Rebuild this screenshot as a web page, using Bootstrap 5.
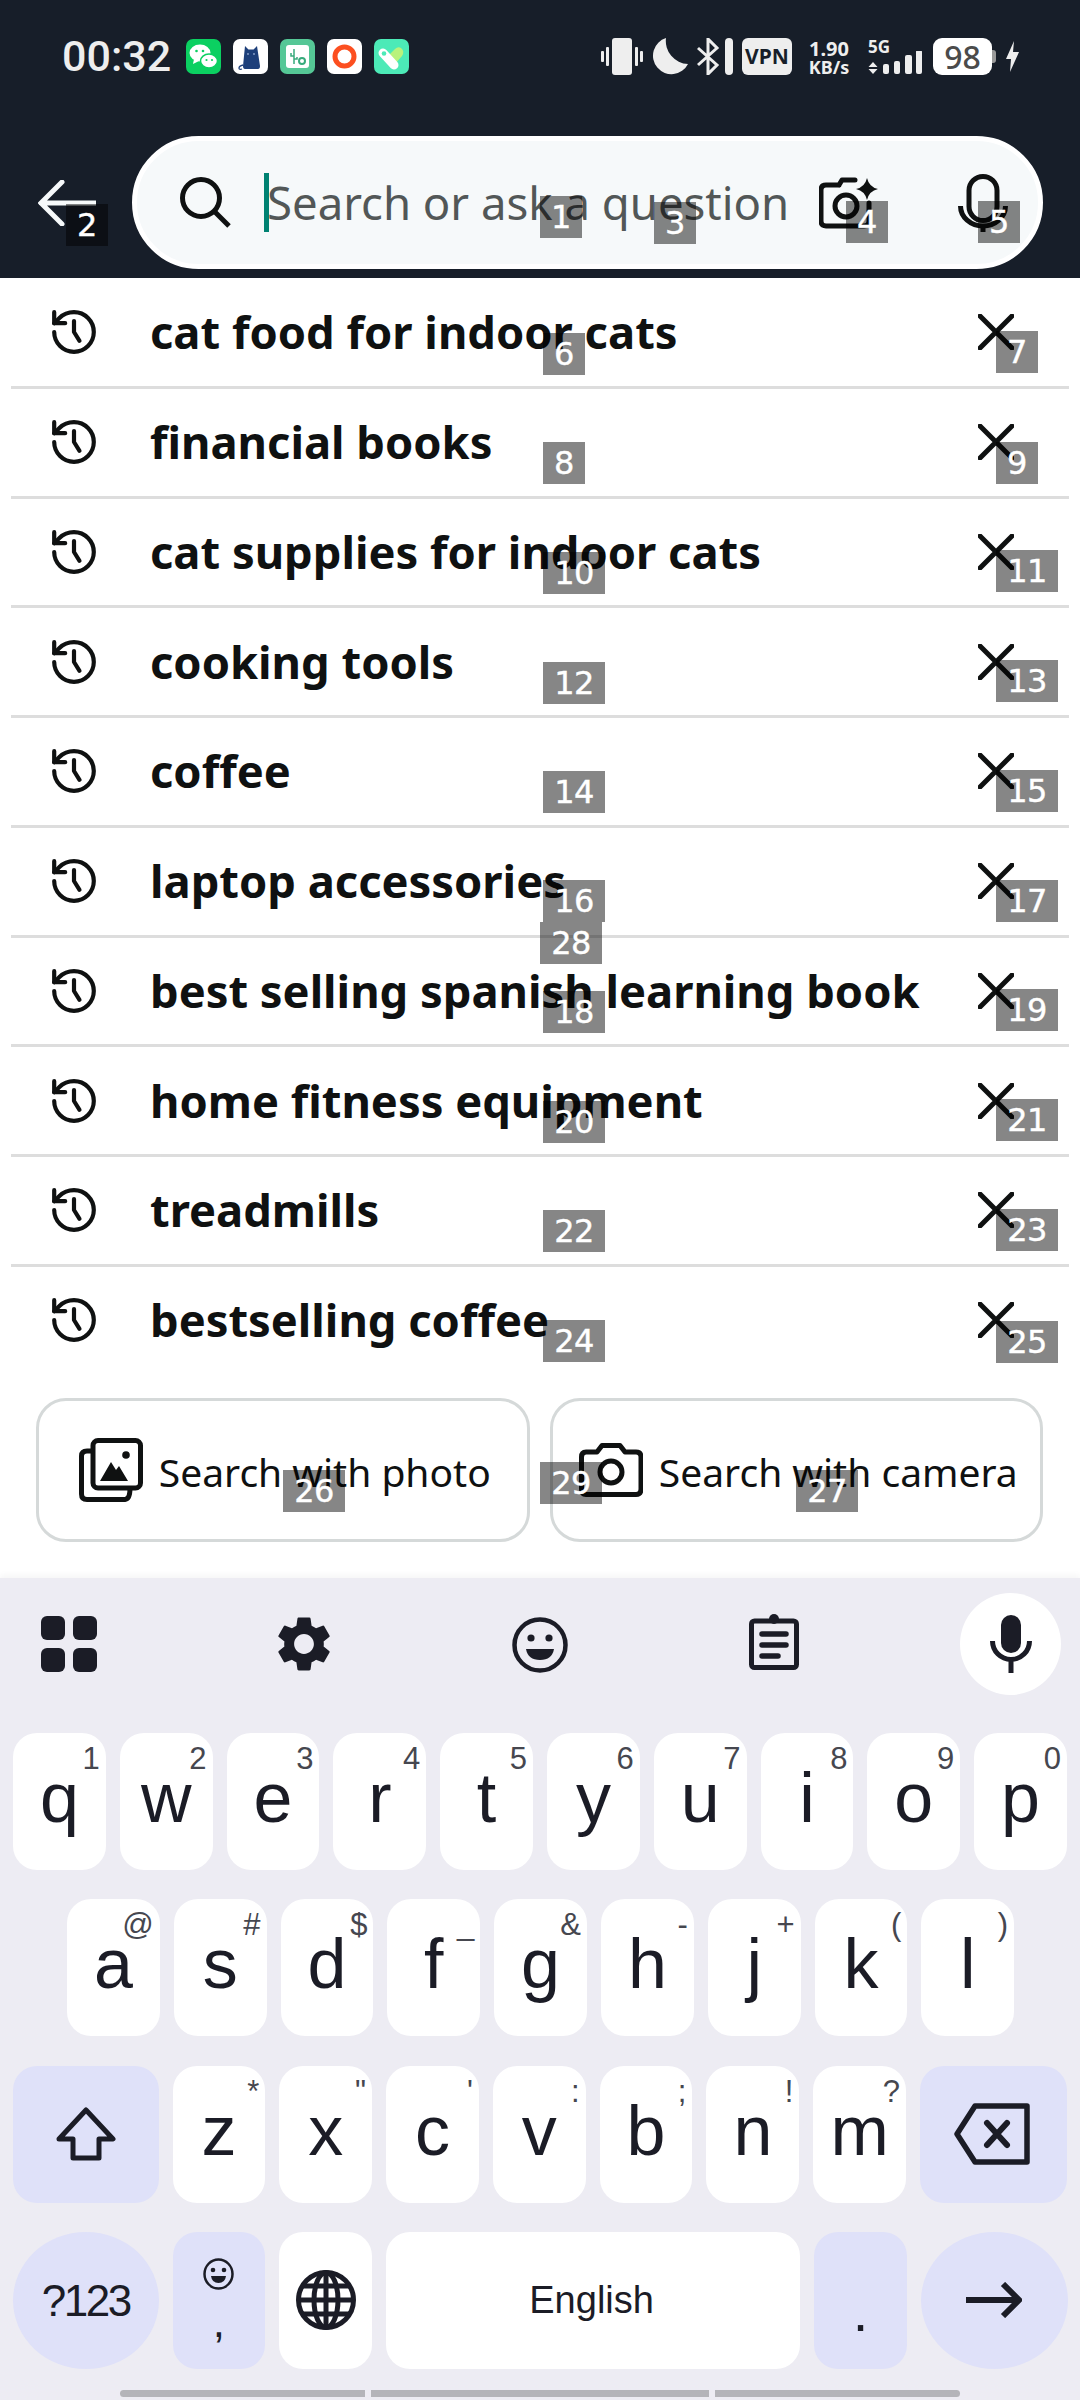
<!doctype html>
<html lang="en">

<head>
    <meta charset="UTF-8" />
    <meta name="viewport" content="width=device-width, initial-scale=1" />
    <title>Search</title>
    <link href="https://cdn.jsdelivr.net/npm/bootstrap@5.3.3/dist/css/bootstrap.min.css" rel="stylesheet">
    <style>
        html, body { width: 1080px; height: 2400px; overflow: hidden; background: #fff; }
        body { position: relative; font-family: "Noto Sans", sans-serif; color: #0f1111; }
        svg { display: block; flex: none; }

        .top-area { background: #171e29; height: 278px; padding-top: 38px; }
        .status-row { height: 37px; padding: 0 61px 0 62px; color: #eee; }
        .clock { font: 500 43px/37px Roboto, sans-serif; width: 124px; }
        .app-icons { gap: 12px; }
        .vpn-box { width: 50px; height: 37px; background: #eee; color: #171e29; border-radius: 6px; font: 700 21px/37px "Noto Sans", sans-serif; text-align: center; }
        .speed { font: 700 20px/20px "Noto Sans", sans-serif; width: 46px; text-align: center; margin-left: 14px; }
        .speed-b { font-size: 18px; line-height: 16px; }
        .batt { width: 59px; height: 37px; background: #fff; color: #4b4b4b; border-radius: 9px; font: 500 32px/37px "Noto Sans", sans-serif; text-align: center; }
        .batt-nub { width: 4px; height: 13px; background: #9a9a9a; border-radius: 0 3px 3px 0; }

        .search-row { margin-top: 61px; }
        .back-wrap { width: 132px; padding-left: 38px; }
        .search-pill { width: 911px; height: 133px; background: #f6f9fa; border: 5px solid #fff; padding-left: 43px; }
        .caret-line { width: 5px; height: 59px; background: #008272; margin-left: 33px; }
        .hint-text { width: 552px; margin-left: -2px; font-size: 45.5px; color: #525757; white-space: nowrap; line-height: 59px; }

        .hist-list { border-radius: 0; margin-top: 1px; }
        .hist-item { height: 109.75px; padding: 0 0 0 41px; margin: 0 11px; border: 0; border-bottom: 3px solid #ddd !important; background: none; }
        .hist-item:last-child { border-bottom: 0 !important; height: 106px; }
        .hist-name { font-size: 45.3px; font-weight: 700; margin-left: 54px; white-space: nowrap; color: #0f1111; font-variant-ligatures: common-ligatures; }
        .hist-x { margin-left: auto; margin-right: 55px; }

        .photo-row { padding: 25px 37px 0 36px; gap: 20px; }
        .photo-btn { width: 494px; height: 144px; border: 3px solid #d5d9d9; border-radius: 30px; background: #fff; color: #0f1111; font-size: 39px; padding: 4px 0 0 4px; gap: 16px; white-space: nowrap; }

        .kbd { position: absolute; left: 0; right: 0; top: 1578px; bottom: 0; background: #edecf3; box-shadow: 0 -3px 6px rgba(0, 0, 0, .04); }
        .kbd-tools { height: 155px; padding: 15px 0 0 41px; }
        .tool-grid { margin-top: 23px; }
        .tool-gear { margin: 18px 0 0 174px; }
        .tool-smile { margin: 24px 0 0 175px; }
        .tool-clip { margin: 21px 0 0 181px; }
        .mic-round { width: 101px; height: 102px; border-radius: 50%; background: #fff; margin-left: 161px; }
        .kbd-rows { gap: 29.33px; }
        .kbd-line { height: 137px; gap: 14px; }
        .kk { position: relative; width: 92.8px; height: 137px; background: #fff; border-radius: 24px; font: 400 70px/130px "Liberation Sans", sans-serif; color: #1b1c26; text-align: center; }
        .kk-alt { background: #dfe1f9; }
        .kk-wide { width: 145.5px; }
        .kk-end { width: 147px; }
        .kk-round { border-radius: 50%; }
        .kk-space { width: 414px; font-size: 38px; line-height: 137px; padding-right: 3px; }
        .kk-sym { font-size: 44px; line-height: 137px; letter-spacing: -2.5px; }
        .kk-hint { position: absolute; right: 6px; top: 8px; font: 400 31px/36px "Liberation Sans", sans-serif; color: #46474f; }
        .kk-dot { font-size: 56px; line-height: 159px; }
        .nav-bars { position: absolute; left: 120px; top: 812px; gap: 6px; }
        .nav-bars div { height: 7px; background: #b4b4b9; }
        .nav-a { width: 245px; border-radius: 4px 0 0 4px; }
        .nav-b { width: 338px; }
        .nav-c { width: 245px; border-radius: 0 4px 4px 0; }

        .mark-box { position: absolute; height: 42px; background: rgba(0, 0, 0, .475); color: #fff; font: 400 32px/42px "DejaVu Sans", sans-serif; text-align: center; letter-spacing: -.5px; -webkit-text-stroke: .4px #fff; }
    </style>
</head>

<body>
    <svg width="0" height="0" style="position:absolute">
        <symbol id="i-history" viewBox="2 2 20 20"><g fill="none" stroke="#0f1111" stroke-width="1.900" stroke-linecap="round" stroke-linejoin="round"><path d="M3 12a9 9 0 1 0 9-9 9.75 9.75 0 0 0-6.74 2.74L3 8"/><path d="M3 3v5h5"/><path d="M12 7v5l2.500 4"/></g></symbol>
        <symbol id="i-x" viewBox="0 0 36 36"><path d="M2 2 34 34M34 2 2 34" stroke="#0f1111" stroke-width="5" fill="none" stroke-linecap="round"/></symbol>
    </svg>

    <div class="top-area">
        <div class="status-row d-flex align-items-center">
            <div class="clock">00:32</div>
            <div class="app-icons d-flex">
                <svg width="35" height="35" viewBox="0 0 35 35"><rect width="35" height="35" rx="7" fill="#0bd061"/><ellipse cx="14" cy="14" rx="10.500" ry="8.500" fill="#fff"/><path d="M8 20l-1 5 6-3z" fill="#fff"/><ellipse cx="23" cy="22" rx="8.500" ry="7" fill="#fff" stroke="#0bd061" stroke-width="1.500"/><circle cx="10.500" cy="12" r="1.300" fill="#0bd061"/><circle cx="17" cy="12" r="1.300" fill="#0bd061"/><circle cx="20.500" cy="21" r="1.100" fill="#0bd061"/><circle cx="26" cy="21" r="1.100" fill="#0bd061"/></svg>
                <svg width="35" height="35" viewBox="0 0 35 35"><rect width="35" height="35" rx="7" fill="#fff"/><path d="M12 7l3.500 3.500h5L24 7l3 20q0 3-2 3H12q-2 0-2-3z" fill="#1d3f7a"/><path d="M10 26q-4 1-4 3t3 1" fill="none" stroke="#1d3f7a" stroke-width="1.300"/><circle cx="15" cy="15" r=".9" fill="#8fa8d0"/><circle cx="21" cy="15" r=".9" fill="#8fa8d0"/></svg>
                <svg width="35" height="35" viewBox="0 0 35 35"><rect width="35" height="35" rx="7" fill="#55c796"/><rect x="6" y="6" width="23" height="23" rx="3" fill="#fff"/><path d="M14 10v15M14 17h-3v-3M14 20h3v-2" fill="none" stroke="#37ab7c" stroke-width="1.500"/><circle cx="22" cy="22" r="3" fill="none" stroke="#37ab7c" stroke-width="2"/></svg>
                <svg width="35" height="35" viewBox="0 0 35 35"><rect width="35" height="35" rx="7" fill="#fff"/><circle cx="17.500" cy="17.500" r="9.500" fill="none" stroke="#fc4f20" stroke-width="5"/></svg>
                <svg width="35" height="35" viewBox="0 0 35 35"><rect width="35" height="35" rx="7" fill="#4ceab7"/><path d="M21 10q3-3 6-1 4 3 1 8l-7 8-8-7z" fill="#b9f27c"/><path d="M9 14 20 26" stroke="#fff" stroke-width="9" stroke-linecap="round"/><circle cx="10" cy="14.500" r="2.300" fill="#4ceab7"/></svg>
            </div>
            <div class="ms-auto d-flex align-items-center">
                <svg width="42" height="37" viewBox="0 0 42 37"><rect x="11" width="20" height="37" rx="3" fill="#eee"/><rect x="5" y="9" width="3" height="19" rx="1" fill="#eee"/><rect y="13" width="3" height="11" rx="1" fill="#eee"/><rect x="34" y="9" width="3" height="19" rx="1" fill="#eee"/><rect x="39" y="13" width="3" height="11" rx="1" fill="#eee"/></svg>
                <svg width="36" height="37" viewBox="0 0 36 37" style="margin-left:9px"><path d="M14 0A18.500 18.500 0 1 0 36 26 23 23 0 0 1 14 0z" fill="#eee"/></svg>
                <svg width="36" height="37" viewBox="0 0 36 37" style="margin-left:9px"><path d="M1 10 20 27 11 36V1l9 9L1 27" fill="none" stroke="#eee" stroke-width="3"/><rect x="28" width="8" height="37" rx="4" fill="#eee"/></svg>
                <div class="vpn-box" style="margin-left:9px">VPN</div>
                <div class="speed">1.90<div class="speed-b">KB/s</div></div>
                <div style="margin-left:16px;width:56px">
                    <div style="font:700 17px/17px 'Noto Sans',sans-serif;height:17px">5G</div>
                    <svg width="56" height="24" viewBox="0 0 56 24" style="margin-top:-4px"><path d="M5 0l4.500 5h-9zM5 12l4.500-5h-9z" fill="#eee" transform="translate(0 11)"/><rect x="15" y="13" width="6" height="10" rx="2" fill="#eee"/><rect x="26" y="10" width="6" height="13" rx="2" fill="#eee"/><rect x="37" y="4" width="7" height="19" rx="2" fill="#eee"/><rect x="48" y="-1" width="6" height="24" rx="2" fill="#eee"/></svg>
                </div>
                <div class="batt" style="margin-left:9px">98</div>
                <div class="batt-nub"></div>
                <svg width="13" height="31" viewBox="0 0 13 31" style="margin-left:10px"><path d="M8 0 0 18h5l-1 13 9-20H7z" fill="#eee"/></svg>
            </div>
        </div>

        <div class="search-row d-flex align-items-center">
            <div class="back-wrap">
                <svg width="58" height="46" viewBox="0 0 58 46"><path d="M24 2 3 23 24 44M3 23H58" fill="none" stroke="#f6f9fa" stroke-width="5" stroke-linecap="round"/></svg>
            </div>
            <div class="search-pill rounded-pill d-flex align-items-center">
                <svg width="51" height="51" viewBox="0 0 51 51"><circle cx="21" cy="21" r="18.500" fill="none" stroke="#0f1111" stroke-width="5"/><path d="M34 34 49 49" stroke="#0f1111" stroke-width="5"/></svg>
                <div class="caret-line"></div>
                <div class="hint-text">Search or ask a question</div>
                <svg width="60" height="52" viewBox="0 0 60 52"><path d="M20 8h-13q-5 0-5 5v31q0 5 5 5h38q5 0 5-5V26M20 8l3-5h13" fill="none" stroke="#0f1111" stroke-width="5" stroke-linecap="round" stroke-linejoin="round"/><circle cx="27" cy="29" r="11" fill="none" stroke="#0f1111" stroke-width="5"/><path d="M48 1q2 9 11 11-9 2-11 11-2-9-11-11 9-2 11-11z" fill="#0f1111"/></svg>
                <svg width="50" height="58" viewBox="0 0 50 58" style="margin-left:79px"><rect x="11" y="2.500" width="28" height="44" rx="14" fill="none" stroke="#0f1111" stroke-width="5"/><path d="M2.500 32a22.500 20 0 0 0 45 0M25 50v8" fill="none" stroke="#0f1111" stroke-width="5"/></svg>
            </div>
        </div>
    </div>

    <div id="hist" class="hist-list list-group list-group-flush"></div>

    <div class="photo-row d-flex">
        <button class="photo-btn btn d-flex align-items-center justify-content-center">
            <svg width="64" height="64" viewBox="0 0 64 64" style="margin-top:-4px"><rect x="14" y="2.500" width="47.500" height="47.500" rx="5" fill="#fff" stroke="#0f1111" stroke-width="5"/><path d="M14 13H8q-5.500 0-5.500 5V56q0 5.500 5.500 5.500H46q5-.5 5-11.500" fill="none" stroke="#0f1111" stroke-width="5"/><circle cx="47" cy="17" r="3.800" fill="#0f1111"/><path d="M21 43 32 24l5 8 3-4 9 15z" fill="#0f1111"/></svg>
            <span>Search with photo</span>
        </button>
        <button class="photo-btn btn d-flex align-items-center justify-content-center">
            <svg width="64" height="54" viewBox="0 0 64 54" style="margin-top:-4px"><path d="M18 9l5-6.500h18l5 6.500h11q5 0 5 5v32q0 5.500-5 5.500H7q-4.500 0-4.500-5.500v-32q0-5 4.500-5z" fill="none" stroke="#0f1111" stroke-width="5" stroke-linejoin="round"/><circle cx="32" cy="29" r="11" fill="none" stroke="#0f1111" stroke-width="5"/></svg>
            <span>Search with camera</span>
        </button>
    </div>

    <div class="kbd">
        <div class="kbd-tools d-flex align-items-start">
            <svg class="tool-grid" width="56" height="56" viewBox="0 0 56 56" fill="#1b1c26"><rect width="24" height="24" rx="6"/><rect x="32" width="24" height="24" rx="6"/><rect y="32" width="24" height="24" rx="6"/><rect x="32" y="32" width="24" height="24" rx="6"/></svg>
            <svg class="tool-gear" width="66" height="66" viewBox="0 0 24 24" fill="#1b1c26"><path d="M19.140 12.940c.04-.3.06-.61.06-.94 0-.32-.02-.64-.07-.94l2.030-1.580a.49.49 0 0 0 .12-.61l-1.920-3.320a.488.488 0 0 0-.59-.22l-2.390.96c-.5-.38-1.030-.7-1.620-.94l-.36-2.540a.484.484 0 0 0-.48-.41h-3.840c-.24 0-.43.17-.47.41l-.36 2.540c-.59.24-1.130.57-1.620.94l-2.390-.96c-.22-.08-.47 0-.59.22L2.740 8.870c-.12.21-.08.47.12.61l2.030 1.580c-.05.3-.09.63-.09.94s.02.64.07.94l-2.030 1.580a.49.49 0 0 0-.12.61l1.920 3.320c.12.22.37.29.59.22l2.390-.96c.5.38 1.030.7 1.620.94l.36 2.540c.05.24.24.41.48.41h3.840c.24 0 .44-.17.47-.41l.36-2.540c.59-.24 1.130-.56 1.620-.94l2.390.96c.22.08.47 0 .59-.22l1.920-3.320c.12-.22.07-.47-.12-.61l-2.010-1.580zM12 15.600c-1.980 0-3.600-1.620-3.600-3.600s1.620-3.600 3.600-3.600 3.600 1.620 3.600 3.600-1.620 3.600-3.600 3.600z"/></svg>
            <svg class="tool-smile" width="56" height="56" viewBox="0 0 56 56"><circle cx="28" cy="28" r="25.500" fill="none" stroke="#1b1c26" stroke-width="4.500"/><circle cx="19" cy="21" r="3.600" fill="#1b1c26"/><circle cx="37" cy="21" r="3.600" fill="#1b1c26"/><path d="M14 32h28q-2 11-14 11T14 32z" fill="#1b1c26"/></svg>
            <svg class="tool-clip" width="50" height="56" viewBox="0 0 50 56"><rect x="2.500" y="7" width="45" height="46.500" rx="3" fill="none" stroke="#1b1c26" stroke-width="5"/><circle cx="25" cy="5" r="5" fill="#1b1c26"/><path d="M13 20h24M13 31h24M13 42h16" stroke="#1b1c26" stroke-width="5.500" stroke-linecap="round"/></svg>
            <div class="mic-round d-flex align-items-center justify-content-center">
                <svg width="42" height="58" viewBox="0 0 42 58"><rect x="11" width="20" height="38" rx="10" fill="#1b1c26"/><path d="M2.500 26a18.500 18.500 0 0 0 37 0M21 44v14" fill="none" stroke="#1b1c26" stroke-width="5"/></svg>
            </div>
        </div>
        <div id="keys" class="kbd-rows d-flex flex-column"></div>
        <div class="nav-bars d-flex">
            <div class="nav-a"></div>
            <div class="nav-b"></div>
            <div class="nav-c"></div>
        </div>
    </div>

    <div id="marks"></div>

    <script>
        const searches = ["cat food for indoor cats", "financial books", "cat supplies for indoor cats", "cooking tools", "coffee", "laptop accessories", "best selling spanish learning book", "home fitness equipment", "treadmills", "bestselling coffee"];
        const histEl = document.getElementById("hist");
        searches.forEach(s => {
            const row = document.createElement("div");
            row.className = "hist-item list-group-item d-flex align-items-center";
            row.innerHTML = `<svg width="44" height="44"><use href="#i-history"/></svg><span class="hist-name">${s}</span><svg class="hist-x" width="36" height="36"><use href="#i-x"/></svg>`;
            histEl.appendChild(row);
        });

        const hints = { q: "1", w: "2", e: "3", r: "4", t: "5", y: "6", u: "7", i: "8", o: "9", p: "0", a: "@", s: "#", d: "$", f: "_", g: "&", h: "-", j: "+", k: "(", l: ")", z: "*", x: '"', c: "'", v: ":", b: ";", n: "!", m: "?" };
        const shiftIcon = `<svg width="60" height="54" viewBox="0 0 60 54"><path d="M30 3 57 32H43V51H17V32H3z" fill="none" stroke="#1b1c26" stroke-width="5" stroke-linejoin="round"/></svg>`;
        const backIcon = `<svg width="76" height="62" viewBox="0 0 76 62" style="margin-right:4px"><path d="M21 3H73V59H21L3 31z" fill="none" stroke="#1b1c26" stroke-width="5.500" stroke-linejoin="round"/><path d="M33 20 53 42M53 20 33 42" stroke="#1b1c26" stroke-width="6" stroke-linecap="round"/></svg>`;
        const smileIcon = `<svg width="31" height="32" viewBox="0 0 31 32"><ellipse cx="15.500" cy="16" rx="14" ry="14.500" fill="none" stroke="#1b1c26" stroke-width="2.500"/><circle cx="10" cy="12" r="2.300" fill="#1b1c26"/><circle cx="21" cy="12" r="2.300" fill="#1b1c26"/><path d="M8 18h15q-1 7-7.500 7T8 18z" fill="#1b1c26"/></svg>`;
        const globeIcon = `<svg width="60" height="60" viewBox="0 0 60 60" fill="none" stroke="#1b1c26" stroke-width="5"><circle cx="30" cy="30" r="27.500"/><ellipse cx="30" cy="30" rx="12" ry="27.500"/><path d="M30 2v56M2 30h56M6 16h48M6 44h48"/></svg>`;
        const enterIcon = `<svg width="56" height="36" viewBox="0 0 56 36"><path d="M0 18H53M37 2 53 18 37 34" fill="none" stroke="#1b1c26" stroke-width="6"/></svg>`;

        function centered(inner) {
            return `<div class="d-flex h-100 align-items-center justify-content-center">${inner}</div>`;
        }

        const rows = [
            { pad: 13, keys: "qwertyuiop".split("") },
            { pad: 67, keys: "asdfghjkl".split("") },
            { pad: 13, keys: [{ cls: "kk-alt kk-wide", html: centered(shiftIcon) }, ..."zxcvbnm".split(""), { cls: "kk-alt kk-end", html: centered(backIcon) }] },
            { pad: 13, keys: [
                { cls: "kk-alt kk-wide kk-round kk-sym", html: "?123" },
                { cls: "kk-alt", html: `<div class="d-flex flex-column h-100 align-items-center" style="padding-top:26px">${smileIcon}<div style="font:400 44px/40px 'Liberation Sans',sans-serif;margin-top:12px">,</div></div>` },
                { cls: "", html: centered(globeIcon) },
                { cls: "kk-space", html: "English" },
                { cls: "kk-alt kk-dot", html: "." },
                { cls: "kk-alt kk-end kk-round", html: centered(enterIcon) }
            ] }
        ];
        const keysEl = document.getElementById("keys");
        rows.forEach(r => {
            const line = document.createElement("div");
            line.className = "kbd-line d-flex";
            line.style.paddingLeft = r.pad + "px";
            r.keys.forEach(k => {
                const key = document.createElement("div");
                if (typeof k === "string") {
                    key.className = "kk";
                    key.textContent = k;
                    const hint = document.createElement("span");
                    hint.className = "kk-hint";
                    hint.textContent = hints[k];
                    key.appendChild(hint);
                } else {
                    key.className = "kk " + k.cls;
                    key.innerHTML = k.html;
                }
                line.appendChild(key);
            });
            keysEl.appendChild(line);
        });

        // numbered grey tags: [number, left, top]
        const marks = [[1, 540, 196], [2, 66, 204], [3, 654, 202], [4, 846, 201], [5, 978, 201], [6, 543, 333], [7, 996, 331], [8, 543, 442], [9, 996, 442], [10, 543, 552], [11, 996, 550], [12, 543, 662], [13, 996, 660], [14, 543, 771], [15, 996, 770], [16, 543, 880], [17, 996, 880], [18, 543, 991], [19, 996, 989], [20, 543, 1101], [21, 996, 1099], [22, 543, 1210], [23, 996, 1209], [24, 543, 1320], [25, 996, 1321], [26, 283, 1470], [27, 796, 1470], [28, 540, 922], [29, 540, 1462]];
        const marksEl = document.getElementById("marks");
        marks.forEach(([n, x, y]) => {
            const m = document.createElement("div");
            m.className = "mark-box";
            m.textContent = n;
            m.style.left = x + "px";
            m.style.top = y + "px";
            m.style.width = (n > 9 ? 62 : 42) + "px";
            marksEl.appendChild(m);
        });
    </script>
    <script src="https://cdn.jsdelivr.net/npm/bootstrap@5.3.3/dist/js/bootstrap.bundle.min.js"></script>
</body>

</html>
